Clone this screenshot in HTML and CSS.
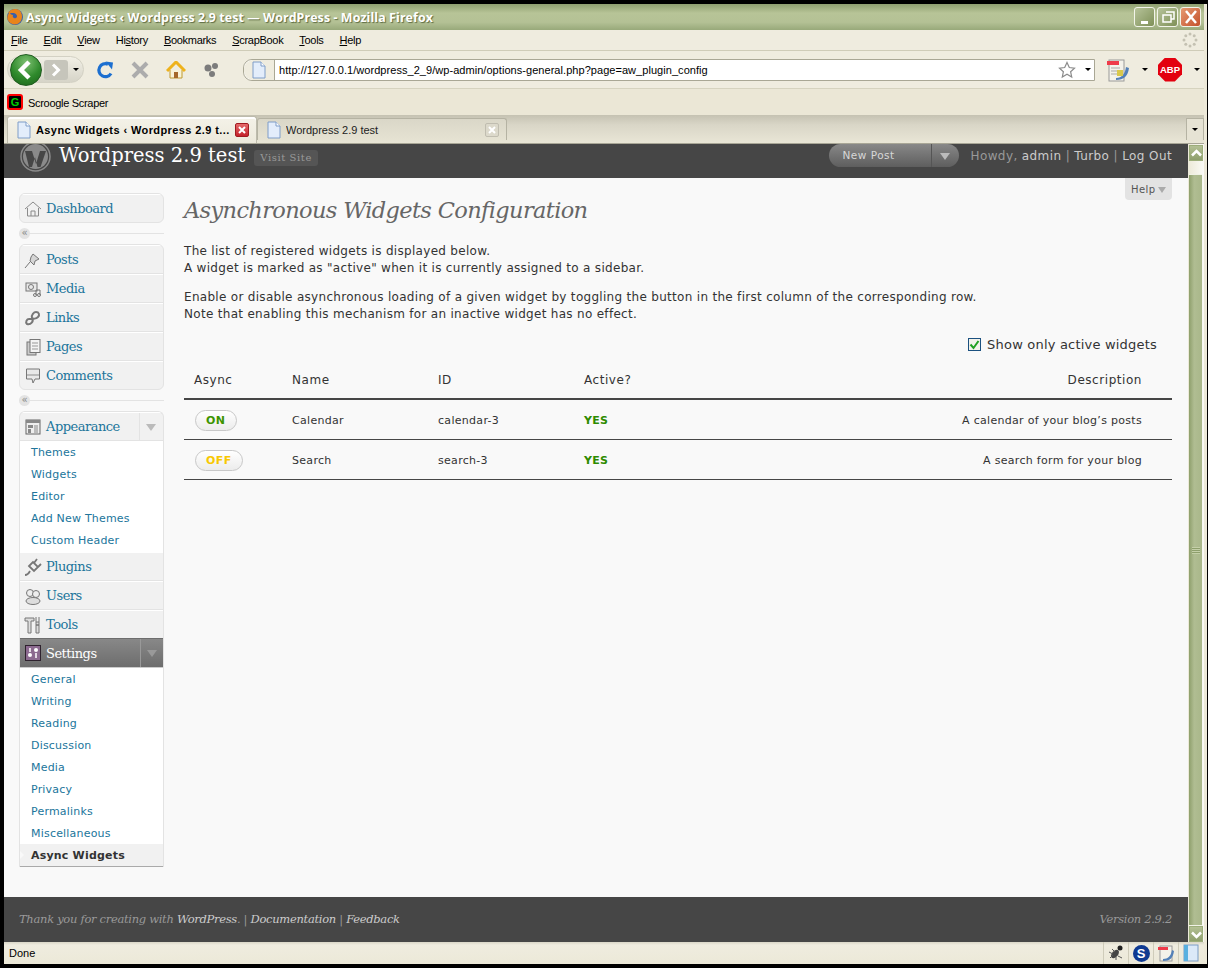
FILE: index.html
```html
<!DOCTYPE html>
<html lang="en">
<head>
    <meta charset="UTF-8">
    <title>Async Widgets ‹ Wordpress 2.9 test — WordPress - Mozilla Firefox</title>
    <link rel="stylesheet" href="styles.css">
</head>
<body>
<div class="window">
    <div class="titlebar">
        <svg class="ff-logo" width="18" height="18" viewBox="0 0 18 18"><circle cx="9" cy="9" r="8" fill="#3a5fa8"/><path d="M2 5 C4 1 10 0 13 2 C17 5 17 12 13 15 C9 18 3 16 1.500 11 C1 8 2 6 4 4 C4 6 5 7 7 7 C6 9 8 11 10 10 C12 9 11 6 8 5 Z" fill="#e8841c"/></svg>
        <span class="title-text">Async Widgets ‹ Wordpress 2.9 test — WordPress - Mozilla Firefox</span>
        <div class="win-buttons">
            <span class="win-btn"><svg width="20" height="20"><rect x="6" y="14" width="7" height="3" fill="#fff"/></svg></span>
            <span class="win-btn"><svg width="20" height="20"><path d="M8 5h8v7h-3M5 8h8v7H5z" fill="none" stroke="#fff" stroke-width="1.500"/></svg></span>
            <span class="win-btn win-close"><svg width="20" height="20"><path d="M5 4l10 12M15 4L5 16" stroke="#fff" stroke-width="2.500"/></svg></span>
        </div>
    </div>

    <div class="menubar">
        <span><u>F</u>ile</span>
        <span><u>E</u>dit</span>
        <span><u>V</u>iew</span>
        <span>Hi<u>s</u>tory</span>
        <span><u>B</u>ookmarks</span>
        <span><u>S</u>crapBook</span>
        <span><u>T</u>ools</span>
        <span><u>H</u>elp</span>
        <svg class="throbber" width="16" height="16" viewBox="0 0 16 16"><g fill="#c4c1b2"><circle cx="8" cy="2" r="1.500"/><circle cx="12.200" cy="3.800" r="1.500"/><circle cx="14" cy="8" r="1.500"/><circle cx="12.200" cy="12.200" r="1.500"/><circle cx="8" cy="14" r="1.500"/><circle cx="3.800" cy="12.200" r="1.500"/><circle cx="2" cy="8" r="1.500"/><circle cx="3.800" cy="3.800" r="1.500"/></g></svg>
    </div>

    <div class="navbar">
        <div class="backforward">
            <span class="back-btn"><svg width="32" height="32" viewBox="0 0 32 32"><path d="M19 8l-8 8 8 8" fill="none" stroke="#fff" stroke-width="4.500"/></svg></span>
            <span class="fwd-btn"><svg width="12" height="14" viewBox="0 0 12 14"><path d="M3 1.500l5.500 5.500L3 12.500" fill="none" stroke="#fff" stroke-width="3"/></svg></span>
            <span class="arrow-down"></span>
        </div>
        <svg class="tool-icon" width="18" height="18" viewBox="0 0 18 18"><path d="M15 12.500A6.500 6.500 0 1 1 12 3.200" fill="none" stroke="#1c6fd0" stroke-width="3.200"/><path d="M9.500 0.500L17 1.500 16 8.500z" fill="#1c6fd0"/></svg>
        <svg class="tool-icon" width="18" height="18" viewBox="0 0 18 18"><path d="M2 2l14 14M16 2L2 16" stroke="#acacac" stroke-width="4"/></svg>
        <svg class="tool-icon" width="20" height="18" viewBox="0 0 20 18"><path d="M4 9v8h12V9" fill="#f8f3d8" stroke="#c09a30"/><path d="M1 10L10 1l9 9" fill="none" stroke="#eeb21c" stroke-width="3"/><rect x="8" y="11" width="4" height="6" fill="#a5682a"/></svg>
        <svg class="tool-icon" width="16" height="16" viewBox="0 0 16 16"><g fill="#7c7c7c"><circle cx="5" cy="6" r="3.500"/><circle cx="12" cy="4" r="3"/><circle cx="9" cy="12" r="3"/></g></svg>
        <div class="urlbar">
            <span class="url-favicon"><svg width="16" height="18" viewBox="0 0 16 18"><path d="M2 1h8l4 4v12H2z" fill="#e3edfb" stroke="#7f9dc8"/><path d="M10 1v4h4" fill="#fff" stroke="#7f9dc8"/></svg></span>
            <span class="url-text">http://127.0.0.1/wordpress_2_9/wp-admin/options-general.php?page=aw_plugin_config</span>
            <svg width="18" height="18" viewBox="0 0 18 18"><path d="M9 1.500l2.300 5 5.200.6-3.900 3.600 1.100 5.300L9 13.300 4.300 16l1.100-5.300L1.500 7.100l5.200-.6z" fill="#fff" stroke="#8b8b8b" stroke-width="1.200"/></svg>
            <span class="arrow-down url-drop"></span>
        </div>
        <svg class="scrapbook" width="24" height="24" viewBox="0 0 24 24"><rect x="3" y="2" width="15" height="21" fill="#f4f2ea" stroke="#9a9a9a"/><rect x="1" y="3" width="12" height="4" fill="#ef3b4a"/><path d="M5 10h9M5 13h6M5 16h6" stroke="#a9a9a9"/><path d="M10 20c6 0 9-4 10-11l3 1c-1 8-5 12-13 12z" fill="#5380b8"/><rect x="11" y="12" width="6" height="6" fill="#d9c84b"/></svg>
        <span class="arrow-down nav-drop1"></span>
        <span class="abp">ABP</span>
        <span class="arrow-down nav-drop2"></span>
    </div>

    <div class="bookmarks">
        <span class="g-icon">G</span>
        <span>Scroogle Scraper</span>
    </div>

    <div class="tabstrip">
        <div class="tab tab-active">
            <svg width="16" height="18" viewBox="0 0 16 18"><path d="M2 1h8l4 4v12H2z" fill="#e3edfb" stroke="#7f9dc8"/><path d="M10 1v4h4" fill="#fff" stroke="#7f9dc8"/></svg>
            <span class="tab-title">Async Widgets ‹ Wordpress 2.9 t...</span>
            <span class="tab-close tab-close-red"><svg width="14" height="14"><path d="M4 4l6 6M10 4l-6 6" stroke="#fff" stroke-width="2"/></svg></span>
        </div>
        <div class="tab">
            <svg width="16" height="18" viewBox="0 0 16 18"><path d="M2 1h8l4 4v12H2z" fill="#e3edfb" stroke="#7f9dc8"/><path d="M10 1v4h4" fill="#fff" stroke="#7f9dc8"/></svg>
            <span class="tab-title">Wordpress 2.9 test</span>
            <span class="tab-close"><svg width="14" height="14"><path d="M4 4l6 6M10 4l-6 6" stroke="#fff" stroke-width="2"/></svg></span>
        </div>
        <span class="tab-list"><span class="arrow-down"></span></span>
    </div>

    <div class="viewport">
        <div class="wp">
            <div class="wp-head">
                <svg class="wp-logo" width="31" height="31" viewBox="0 0 31 31"><circle cx="15.500" cy="15.500" r="14.500" fill="none" stroke="#8a8a8a" stroke-width="1.500"/><circle cx="15.500" cy="15.500" r="12.500" fill="#8a8a8a"/><path d="M5 10h7l4 13 4-13h6l-5.500 16h-3L15 16l-3 10H9z" fill="#464646"/></svg>
                <h1>Wordpress 2.9 test</h1>
                <span class="visit-site">Visit Site</span>
                <div class="favorite">
                    <span class="fav-label">New Post</span>
                    <span class="fav-arrow"></span>
                </div>
                <div class="user-info">Howdy, <b>admin</b> | <b>Turbo</b> | <b>Log Out</b></div>
            </div>

            <div class="wp-body">
                <div class="sidebar">
                    <div class="menu-group">
                        <div class="menu-item">
                            <svg class="menu-icon" width="18" height="18" viewBox="0 0 18 18"><path d="M1 9l8-7 8 7M3.500 8v8h11V8M7 16v-5h4v5" fill="none" stroke="#8a8a8a"/></svg>
                            Dashboard
                        </div>
                    </div>
                    <div class="menu-sep"><span>«</span></div>
                    <div class="menu-group">
                        <div class="menu-item">
                            <svg class="menu-icon" width="18" height="18" viewBox="0 0 18 18"><path d="M9 3l6 5-4 2-1 4-4-4 1-4zM6 11l-5 6" fill="#d5d5d5" stroke="#777"/></svg>
                            Posts
                        </div>
                        <div class="menu-item">
                            <svg class="menu-icon" width="18" height="18" viewBox="0 0 18 18"><rect x="2" y="3" width="11" height="8" fill="#e8e8e8" stroke="#777"/><circle cx="7" cy="7" r="2.500" fill="none" stroke="#777"/><path d="M12 15V10h4v5" fill="none" stroke="#777"/><circle cx="11" cy="15" r="1.500" fill="none" stroke="#777"/><circle cx="15" cy="15" r="1.500" fill="none" stroke="#777"/></svg>
                            Media
                        </div>
                        <div class="menu-item">
                            <svg class="menu-icon" width="18" height="18" viewBox="0 0 18 18"><path d="M3 15c-2-2 0-5 2-5l3 0c2 2-1 6-5 5zM8 9c-1-3 2-6 4-6 3 0 4 3 2 5s-5 2-6 1z" fill="none" stroke="#777" stroke-width="2"/></svg>
                            Links
                        </div>
                        <div class="menu-item">
                            <svg class="menu-icon" width="18" height="18" viewBox="0 0 18 18"><rect x="3" y="4" width="9" height="13" fill="#ccc" stroke="#777"/><rect x="6" y="1.500" width="10" height="13" fill="#f4f4f4" stroke="#777"/><path d="M8 5h6M8 8h6M8 11h6" stroke="#999"/></svg>
                            Pages
                        </div>
                        <div class="menu-item">
                            <svg class="menu-icon" width="18" height="18" viewBox="0 0 18 18"><path d="M2.500 2h13v10H11l-2 4-1-4H2.500z" fill="#e8e8e8" stroke="#777"/><rect x="3" y="7" width="12" height="2" fill="#bbb"/></svg>
                            Comments
                        </div>
                    </div>
                    <div class="menu-sep"><span>«</span></div>
                    <div class="menu-group menu-group-flat">
                        <div class="menu-item has-toggle">
                            <svg class="menu-icon" width="18" height="18" viewBox="0 0 18 18"><rect x="2" y="2" width="14" height="14" fill="#eee" stroke="#666"/><rect x="2" y="2" width="14" height="3" fill="#888"/><rect x="4" y="7" width="5" height="3" fill="#888"/><rect x="4" y="11" width="3" height="4" fill="#888"/><rect x="10" y="7" width="4" height="8" fill="#bbb"/></svg>
                            Appearance
                            <span class="menu-toggle"><i></i></span>
                        </div>
                        <div class="submenu submenu-closed">
                            <a>Themes</a>
                            <a>Widgets</a>
                            <a>Editor</a>
                            <a>Add New Themes</a>
                            <a>Custom Header</a>
                        </div>
                        <div class="menu-item">
                            <svg class="menu-icon" width="18" height="18" viewBox="0 0 18 18"><path d="M1 17c3 0 4-2 5-4M5 8l5 5 4-4-5-5zM10 5l3-4M14 9l3-3" fill="none" stroke="#777" stroke-width="1.800"/></svg>
                            Plugins
                        </div>
                        <div class="menu-item">
                            <svg class="menu-icon" width="18" height="18" viewBox="0 0 18 18"><circle cx="6" cy="6" r="3.500" fill="#eee" stroke="#777"/><circle cx="12" cy="7" r="3.500" fill="#eee" stroke="#777"/><ellipse cx="9" cy="14" rx="7" ry="3.500" fill="#ddd" stroke="#777"/></svg>
                            Users
                        </div>
                        <div class="menu-item">
                            <svg class="menu-icon" width="18" height="18" viewBox="0 0 18 18"><path d="M1 2h9v3H7v12H4V5H1zM12 1v5M15 1v5M12 6h3v3h-3zM12 9h3v8h-3z" fill="#ddd" stroke="#777"/></svg>
                            Tools
                        </div>
                        <div class="menu-item menu-current has-toggle">
                            <svg class="menu-icon" width="18" height="18" viewBox="0 0 18 18"><rect x="1.500" y="1.500" width="15" height="15" fill="#8c6a90" stroke="#2e222e"/><path d="M6 4v4M12 9v5" stroke="#fff" stroke-width="1.500"/><circle cx="6" cy="11" r="2" fill="#fff"/><circle cx="12" cy="6" r="2" fill="#fff"/></svg>
                            Settings
                            <span class="menu-toggle"><i></i></span>
                        </div>
                        <div class="submenu submenu-open">
                            <a>General</a>
                            <a>Writing</a>
                            <a>Reading</a>
                            <a>Discussion</a>
                            <a>Media</a>
                            <a>Privacy</a>
                            <a>Permalinks</a>
                            <a>Miscellaneous</a>
                            <a class="sub-current">Async Widgets</a>
                        </div>
                    </div>
                </div>

                <div class="main">
                    <div class="page-head">
                        <h2>Asynchronous Widgets Configuration</h2>
                        <span class="help-tab">Help<i></i></span>
                    </div>
                    <p>The list of registered widgets is displayed below.<br>A widget is marked as "active" when it is currently assigned to a sidebar.</p>
                    <p>Enable or disable asynchronous loading of a given widget by toggling the button in the first column of the corresponding row.<br>Note that enabling this mechanism for an inactive widget has no effect.</p>
                    <label class="only-active">
                        <span class="checkbox"><svg width="11" height="11" viewBox="0 0 11 11"><path d="M1.500 5.500l3 3.500 5-7" fill="none" stroke="#21a121" stroke-width="2"/></svg></span>
                        Show only active widgets
                    </label>
                    <table class="widgets">
                        <thead>
                            <tr><th class="col-async">Async</th><th class="col-name">Name</th><th class="col-id">ID</th><th class="col-active">Active?</th><th class="col-desc">Description</th></tr>
                        </thead>
                        <tbody>
                            <tr><td><span class="toggle toggle-on">ON</span></td><td>Calendar</td><td>calendar-3</td><td class="yes">YES</td><td class="col-desc">A calendar of your blog’s posts</td></tr>
                            <tr><td><span class="toggle toggle-off">OFF</span></td><td>Search</td><td>search-3</td><td class="yes">YES</td><td class="col-desc">A search form for your blog</td></tr>
                        </tbody>
                    </table>
                </div>
            </div>

            <div class="wp-foot">
                <span class="foot-left">Thank you for creating with <b>WordPress</b>. | <b>Documentation</b> | <b>Feedback</b></span>
                <span class="foot-right">Version 2.9.2</span>
            </div>
        </div>

        <div class="scrollbar">
            <span class="sb-btn"><svg width="13" height="13" viewBox="0 0 13 13"><path d="M2 8.500l4.500-4.500 4.500 4.500" fill="none" stroke="#fff" stroke-width="2.500"/></svg></span>
            <div class="sb-track">
                <div class="sb-thumb"><span class="sb-grip"></span></div>
            </div>
            <span class="sb-btn"><svg width="13" height="13" viewBox="0 0 13 13"><path d="M2 4.500l4.500 4.500 4.500-4.500" fill="none" stroke="#fff" stroke-width="2.500"/></svg></span>
        </div>
    </div>

    <div class="statusbar">
        <span class="status-text">Done</span>
        <div class="status-icons">
            <span class="status-cell"><svg width="18" height="18" viewBox="0 0 18 18"><ellipse cx="8" cy="10" rx="3" ry="5" transform="rotate(40 8 10)" fill="#444"/><circle cx="13" cy="4" r="2.500" fill="#222"/><path d="M2 8l4 2M3 14l3-3M9 16l0-3M11 12l4 2M5 5l3 3" stroke="#555"/></svg></span>
            <span class="status-cell"><span class="s-icon">S</span></span>
            <span class="status-cell"><svg width="18" height="18" viewBox="0 0 18 18"><rect x="3" y="2" width="12" height="15" fill="#f4f2ea" stroke="#9a9a9a"/><rect x="1" y="3" width="10" height="3" fill="#ef3b4a"/><path d="M6 15c5 0 8-3 9-9l2 1c-1 7-4 10-11 10z" fill="#5380b8"/></svg></span>
            <span class="status-cell"><svg width="16" height="18" viewBox="0 0 16 18"><rect x="1" y="1" width="14" height="16" fill="#dbe9f8" stroke="#7b9cc4"/><rect x="1" y="1" width="4" height="16" fill="#59b0e0"/></svg></span>
        </div>
    </div>
</div>
</body>
</html>
```

FILE: styles.css
```css
html, body { margin: 0; padding: 0; }
body { background: #000; width: 1208px; height: 968px; overflow: hidden; font-family: "DejaVu Sans", sans-serif; }
svg { display: block; flex: none; }

.window { box-sizing: border-box; margin: 4px 0 0 4px; height: 960px; display: flex; flex-direction: column; background: #ece9d8; border-right: 3px solid #ede9d9; width: 1203px; }

/* firefox chrome */
.titlebar { height: 26px; flex: none; display: flex; align-items: center; padding-left: 2px; background: linear-gradient(#8e9f70, #b7c497 35%, #b4c195 70%, #98a97a); font: bold 12.400px "Open Sans", sans-serif; color: #fff; text-shadow: 1px 1px 1px #5d6b42; }
.ff-logo { margin-right: 2px; }
.title-text { letter-spacing: 0.100px; }
.win-buttons { margin-left: auto; display: flex; gap: 2px; padding-right: 3px; }
.win-btn { width: 21px; height: 20px; box-sizing: border-box; border: 1px solid #f2f4ea; border-radius: 3px; background: linear-gradient(135deg, #b6c39a, #7f9058); }
.win-btn svg { margin: -1px 0 0 0; }
.win-close { background: linear-gradient(135deg, #e69a72, #c4512c); }

.menubar { height: 21px; flex: none; display: flex; align-items: center; padding-left: 7px; gap: 16px; background: #efecdf; border-bottom: 1px solid #cfccb8; font: 11px "Liberation Sans", sans-serif; letter-spacing: -0.300px; color: #000; box-sizing: border-box; }
.throbber { margin-left: auto; margin-right: 6px; }

.navbar { height: 38px; flex: none; display: flex; align-items: center; background: #efecdf; border-bottom: 1px solid #d6d3bf; box-sizing: border-box; padding-left: 3px; }
.backforward { display: flex; align-items: center; width: 77px; height: 27px; border-radius: 14px; background: linear-gradient(#f2f0e6, #d6d4c8); border: 1px solid #d3d1c4; box-sizing: border-box; position: relative; padding-left: 2px; }
.back-btn { width: 32px; height: 32px; border-radius: 50%; background: radial-gradient(circle at 50% 25%, #7dc071, #2f8a2c 55%, #19621a); border: 1px solid #1f5c1f; box-sizing: border-box; display: flex; align-items: center; justify-content: center; flex: none; }
.back-btn svg { margin: -1px; }
.fwd-btn { margin-left: 2px; width: 24px; height: 20px; background: #c6c5bb; border-radius: 3px; display: flex; align-items: center; justify-content: center; }
.arrow-down { display: inline-block; width: 0; height: 0; border: 3px solid transparent; border-top: 3px solid #000; border-bottom: 0; flex: none; }
.backforward .arrow-down { margin-left: 5px; }
.tool-icon { margin-left: 17px; }
.navbar .tool-icon:nth-of-type(1) { margin-left: 12px; }
.urlbar { margin-left: 24px; width: 852px; height: 22px; display: flex; align-items: center; box-sizing: border-box; border: 1px solid #a9a795; border-radius: 9px 0 0 9px; background: #fff; font: 11px "Liberation Sans", sans-serif; color: #000; padding-right: 3px; }
.url-favicon { width: 30px; height: 20px; display: flex; align-items: center; justify-content: center; background: #efecdf; border-right: 1px solid #a9a795; border-radius: 9px 0 0 9px; margin-right: 4px; flex: none; }
.url-text { flex: 1; letter-spacing: 0.050px; }
.url-drop { margin-left: 9px; }
.scrapbook { margin-left: 11px; }
.nav-drop1 { margin-left: 12px; }
.abp { margin-left: 10px; width: 24px; height: 24px; background: #e3000f; color: #fff; font: bold 9.500px "Liberation Sans", sans-serif; display: flex; align-items: center; justify-content: center; clip-path: polygon(30% 0, 70% 0, 100% 30%, 100% 70%, 70% 100%, 30% 100%, 0 70%, 0 30%); }
.nav-drop2 { margin-left: 12px; }

.bookmarks { height: 26px; flex: none; display: flex; align-items: center; gap: 5px; padding: 1px 0 0 3px; font: 11px "Liberation Sans", sans-serif; letter-spacing: -0.300px; color: #000; background: #ebe7d6; box-sizing: border-box; }
.g-icon { width: 16px; height: 16px; box-sizing: border-box; margin-top: -1px; background: #000; border: 2px solid #f00; border-radius: 3px; color: #0c0; font: bold 11px/12px "Liberation Sans", sans-serif; text-align: center; }

.tabstrip { height: 29px; flex: none; display: flex; align-items: flex-end; padding-left: 3px; background: linear-gradient(#c5c2b2, #d9d6c7 35%, #e9e6d6); border-bottom: 1px solid #a8a696; box-sizing: border-box; font: 11px "Liberation Sans", sans-serif; color: #222; }
.tab { width: 250px; height: 22px; margin-bottom: 3px; box-sizing: border-box; display: flex; align-items: center; padding: 0 7px 0 8px; gap: 4px; border: 1px solid #b5b3a3; border-bottom: 0; border-radius: 3px 3px 0 0; background: linear-gradient(#dad7c8, #e5e2d2); }
.tab-active { height: 27px; margin-bottom: 0; padding: 0 7px 1px 8px; font-weight: bold; color: #000; letter-spacing: 0.400px; background: linear-gradient(#f4f2e8, #ece9db); box-shadow: inset 0 2px 0 #fff; border-color: #bdbbac; }
.tab-title { flex: 1; white-space: nowrap; overflow: hidden; }
.tab-close { width: 14px; height: 14px; background: #dcd9cb; border: 1px solid #c0bdb0; box-sizing: border-box; border-radius: 2px; }
.tab-close svg { margin: -1px; }
.tab-close-red { background: linear-gradient(#e46a6a, #c4202a); border-color: #a01a20; }
.tab-list { margin: 0 0 3px auto; width: 18px; height: 22px; display: flex; align-items: center; justify-content: center; background: #e6e3d4; border: 1px solid #b5b3a3; border-bottom: 0; box-sizing: border-box; }

.viewport { height: 798px; flex: none; display: flex; }
.statusbar { flex: 1; display: flex; align-items: center; justify-content: space-between; background: linear-gradient(#d9d6c7, #efecdf 3px, #ece9d8); font: 11px "Liberation Sans", sans-serif; color: #000; padding-left: 5px; }
.status-icons { display: flex; height: 100%; padding-right: 1px; }
.status-cell { width: 24px; display: flex; align-items: center; justify-content: center; border-left: 1px solid #cfccba; }
.s-icon { width: 17px; height: 17px; border-radius: 50%; background: #0f3a92; color: #fff; font: bold 13px/17px "Liberation Sans", sans-serif; text-align: center; }

/* scrollbar */
.scrollbar { width: 16px; flex: none; box-sizing: border-box; padding: 1px 1px 0; display: flex; flex-direction: column; background: linear-gradient(90deg, #ece9d8, #fafaf6); }
.sb-btn { height: 16px; box-sizing: border-box; border: 1px solid #f2f4ea; outline: 1px solid #9cad7a; outline-offset: -1px; background: linear-gradient(#b3c094, #8e9f6c); display: flex; align-items: center; justify-content: center; flex: none; }
.sb-track { flex: 1; padding: 13px 1px 0 0; display: flex; }
.sb-thumb { flex: 1; background: linear-gradient(90deg, #8e9f6c, #b0bd92 40%, #a9b78a); border: 1px solid #f0f2e6; border-width: 1px 0; display: flex; align-items: center; justify-content: center; }
.sb-grip { width: 8px; height: 7px; background: repeating-linear-gradient(#c4cfa8 0 1px, #8e9f6c 1px 2px); }

/* wordpress page */
.wp { flex: 1; display: flex; flex-direction: column; background: #f9f9f9; min-width: 0; }
.wp-head { height: 34px; flex: none; display: flex; align-items: flex-start; background: #464646; padding-left: 16px; overflow: hidden; }
.wp-logo { margin-top: -3px; }
.wp-head h1 { margin: 0 0 0 8px; font: normal 19.500px/24px "DejaVu Serif", serif; color: #fff; }
.visit-site { margin: 6px 0 0 9px; padding: 0 6px; height: 16px; background: #555; border-radius: 3px; font: 10px/16px "DejaVu Serif", serif; letter-spacing: 0.600px; color: #999; }
.favorite { margin: 0 0 0 auto; width: 130px; height: 23px; display: flex; border-radius: 12px; background: linear-gradient(#888, #5e5e5e); font-size: 10.500px; line-height: 22px; color: #d7d7d7; letter-spacing: 0.500px; }
.fav-label { flex: 1; padding-left: 13px; border-right: 1px solid #555; }
.fav-arrow { width: 27px; position: relative; }
.fav-arrow::after { content: ""; position: absolute; left: 8px; top: 9px; border: 5px solid transparent; border-top: 7px solid #bbb; border-bottom: 0; }
.user-info { margin: 3px 16px 0 11px; font-size: 12px; color: #999; letter-spacing: 0.400px; line-height: 18px; }
.user-info b { font-weight: normal; color: #ccc; }

.wp-body { flex: 1; display: flex; min-height: 0; }
.sidebar { width: 145px; margin: 15px 0 0 15px; flex: none; }
.menu-group { border: 1px solid #e3e3e3; border-radius: 6px; background: #f1f1f1; overflow: hidden; }
.menu-group-flat { border-radius: 6px 6px 0 0; border-bottom: 0; }
.menu-item { height: 29px; box-sizing: border-box; display: flex; align-items: center; font: 13px "DejaVu Serif", serif; letter-spacing: -0.500px; color: #21759b; border-top: 1px solid #fff; border-bottom: 1px solid #e3e3e3; }
.menu-group > .menu-item:last-child { height: 28px; border-bottom: 0; }
.menu-icon { margin: 0 4px 0 4px; width: 18px; height: 18px; }
.menu-toggle { margin-left: auto; width: 23px; height: 100%; border-left: 1px solid #e3e3e3; position: relative; }
.menu-toggle i { position: absolute; left: 6px; top: 11px; border: 5px solid transparent; border-top: 7px solid #bbb; border-bottom: 0; }
.menu-sep { height: 21px; display: flex; align-items: center; background: linear-gradient(#e3e3e3, #e3e3e3) center / 100% 1px no-repeat; }
.menu-sep span { width: 11px; height: 11px; border-radius: 50%; background: #e3e3e3; font-size: 10px; line-height: 10px; text-align: center; color: #888; }
.submenu { background: #fff; }
.submenu-closed { padding-bottom: 1px; }
.submenu a { display: block; box-sizing: border-box; height: 22px; padding: 1px 0 0 11px; font-size: 11px; line-height: 21px; color: #21759b; letter-spacing: 0.200px; }
.menu-current { background: linear-gradient(#888, #6d6d6d); color: #fff; border-top: 1px solid #6d6d6d; border-bottom: 0; margin: -1px -1px 0; }
.menu-current .menu-icon { margin-left: 5px; }
.menu-current .menu-toggle { border-left: 1px solid #999; }
.menu-current .menu-toggle i { border-top-color: #999; }
.submenu-open { margin: 0 -1px; border: 1px solid #aaa; border-top: 1px solid #ccc; }
.sub-current { background: #f1f1f1; font-weight: bold; color: #333 !important; letter-spacing: 0.400px; position: relative; }
.sub-current::before { content: ""; position: absolute; left: -1px; top: 6px; border: 5px solid transparent; border-left: 5px solid #f9f9f9; border-right: 0; }

.main { flex: 1; min-width: 0; padding: 0 16px 0 20px; font-size: 12px; line-height: 17px; color: #333; letter-spacing: 0.300px; }
.page-head { display: flex; justify-content: space-between; align-items: flex-start; height: 65px; }
.page-head h2 { margin: 18px 0 0; font: italic normal 22.500px/29px "DejaVu Serif", serif; color: #666; letter-spacing: -0.650px; }
.help-tab { width: 47px; height: 22px; box-sizing: border-box; padding: 1px 0 0 6px; background: #e3e3e3; border-radius: 0 0 4px 4px; font-size: 10px; line-height: 21px; letter-spacing: 0.400px; color: #555; display: flex; align-items: center; gap: 3px; }
.help-tab i { border: 4px solid transparent; border-top: 6px solid #aaa; border-bottom: 0; }
.main p { margin: 0 0 12px; }
.only-active { display: flex; align-items: center; justify-content: flex-end; gap: 6px; height: 18px; margin: 10px 15px 0 0; font-size: 13px; letter-spacing: 0.200px; }
.checkbox { width: 13px; height: 13px; box-sizing: border-box; border: 1px solid #1c5180; background: #f2f2ea; display: flex; align-items: center; justify-content: center; }
.widgets { margin-top: 9px; width: 988px; table-layout: fixed; border-collapse: collapse; font-size: 11px; }
.widgets th { height: 36px; padding: 0; font-size: 12px; font-weight: normal; text-align: left; letter-spacing: 0.550px; border-bottom: 2px solid #464646; color: #333; }
.widgets td { height: 37px; padding: 2px 0 0; border-bottom: 1px solid #464646; letter-spacing: 0.300px; }
.col-async { width: 98px; padding-left: 10px !important; }
.widgets td:first-child { padding-left: 11px; }
.col-name, .col-id { width: 146px; }
.col-active { width: 146px; }
.widgets .col-desc { text-align: right; padding-right: 30px; }
.yes { color: #2e8b00; font-weight: bold; }
.toggle { display: inline-block; height: 21px; box-sizing: border-box; padding: 0 10px; border: 1px solid #c8c8c8; border-radius: 11px; background: linear-gradient(#fff, #ececec); font-weight: bold; line-height: 20px; letter-spacing: 0.500px; }
.toggle-on { color: #3c9400; }
.toggle-off { color: #f8c800; }

.wp-foot { height: 45px; box-sizing: border-box; padding: 0 16px 2px 15px; flex: none; display: flex; justify-content: space-between; align-items: center; background: #464646; font: italic 11.500px "DejaVu Serif", serif; letter-spacing: -0.300px; color: #999; }
.wp-foot b { font-weight: normal; color: #ccc; }
```
